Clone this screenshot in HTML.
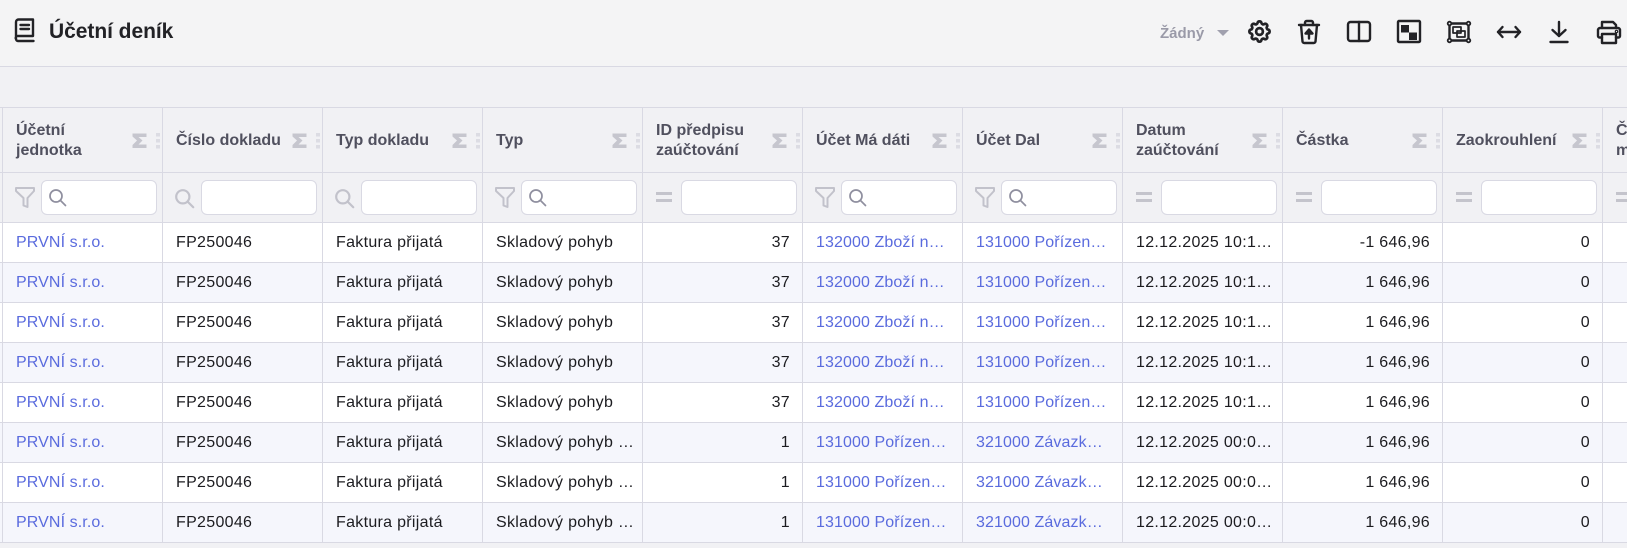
<!DOCTYPE html>
<html lang="cs">
<head>
<meta charset="utf-8">
<title>Účetní deník</title>
<style>
html,body{margin:0;padding:0;width:1627px;height:548px;overflow:hidden;background:#f1f1f4;font-family:"Liberation Sans",sans-serif;}
#bar{position:absolute;left:0;top:0;width:1627px;height:66px;background:#f4f4f5;border-bottom:1px solid #d9d9e3;}
#title{position:absolute;left:49px;top:17px;font-size:21px;line-height:30px;font-weight:bold;color:#222226;white-space:nowrap;letter-spacing:-.05px;}
#zad{position:absolute;left:1160px;top:24px;font-size:15px;line-height:20px;font-weight:bold;color:#9a9aa8;}
#car{position:absolute;left:1217px;top:30px;width:0;height:0;border-left:6px solid transparent;border-right:6px solid transparent;border-top:6px solid #a0a0ae;}
svg.i{position:absolute;fill:none;stroke:#222226;stroke-width:2.4;stroke-linecap:round;stroke-linejoin:round;}
#wrap{position:absolute;left:-158px;top:107px;width:1785px;height:441px;overflow:hidden;}
table{border-collapse:separate;border-spacing:0;table-layout:fixed;width:1920px;}
col{width:160px;}
td,th{box-sizing:border-box;border-left:1px solid #d9d9e3;border-bottom:1px solid #d9d9e3;padding:0 12px 0 13px;white-space:nowrap;overflow:hidden;position:relative;}
tr.h th{height:66px;background:#f1f1f4;border-top:1px solid #d9d9e3;text-align:left;font-size:16px;line-height:20px;color:#50505e;letter-spacing:0;font-weight:bold;padding-top:1px;}
tr.h{height:66px;}
tr.f td{height:50px;background:#f1f1f4;padding:0;}
tr.f{height:50px;}
tr.r td{height:40px;font-size:16px;color:#1c1c20;letter-spacing:.3px;background:#fff;}
tr.r.e td{background:#f5f6fc;}
tr.r{height:40px;}
tr.r td.n{text-align:right;}
tr.r td.l{color:#5a6bde;letter-spacing:.1px;}
.s{position:absolute;left:129px;top:25px;width:16px;height:16px;}
.d{position:absolute;left:153px;top:25px;width:4px;height:16px;}
.inp{position:absolute;left:38px;top:7px;width:116px;height:35px;box-sizing:border-box;background:#fff;border:1px solid #d9d9e3;border-radius:6px;}
svg.g{position:absolute;fill:none;stroke:#c2c2cb;stroke-width:2;stroke-linecap:round;stroke-linejoin:round;}
svg.m{position:absolute;left:45px;top:15px;fill:none;stroke:#8f8f9f;stroke-width:1.7;stroke-linecap:round;stroke-linejoin:round;}
.eq{position:absolute;left:13px;top:19px;width:16px;height:10px;box-sizing:border-box;border-top:3px solid #c4c4cc;border-bottom:3px solid #c4c4cc;}
</style>
</head>
<body>
<svg width="0" height="0" style="position:absolute">
<defs>
<g id="sig"><path d="M0.500 0.500H14.500V4H6.500L10.500 7.500L6.500 11.500H14.500V15H0.500V12L5 7.500L0.500 3.500Z" fill="#c6c6ce" stroke="none"/></g>
<g id="dots"><rect x="0" y="0" width="4" height="3.500" fill="#dcdce3"/><rect x="0" y="6" width="4" height="3.500" fill="#dcdce3"/><rect x="0" y="12" width="4" height="3.500" fill="#dcdce3"/></g>
<g id="fil"><path d="M2 2H20V5L13.500 12V21L9.500 19.500V12L2 5Z"/></g>
<g id="mag"><circle cx="8" cy="8" r="6"/><path d="M12.500 12.500L17.500 17.500"/></g>
</defs>
</svg>

<div id="bar"></div>
<svg class="i" style="left:12px;top:17px" width="24" height="26" viewBox="0 0 24 26"><path d="M4 22V5a2.500 2.500 0 0 1 2.500-2.500H21V19H6a2 2 0 0 0-2 3a2 2 0 0 0 2 2H21.500"/><path d="M8.500 8H17M8.500 12H17" stroke-width="2.400"/></svg>
<div id="title">Účetní deník</div>
<div id="zad">Žádný</div>
<div id="car"></div>

<svg class="i" style="left:1246px;top:18px" width="27" height="27" viewBox="0 0 24 24"><path d="M10.325 4.317c.426 -1.756 2.924 -1.756 3.35 0a1.724 1.724 0 0 0 2.573 1.066c1.543 -.94 3.31 .826 2.37 2.37a1.724 1.724 0 0 0 1.065 2.572c1.756 .426 1.756 2.924 0 3.35a1.724 1.724 0 0 0 -1.066 2.573c.94 1.543 -.826 3.31 -2.37 2.37a1.724 1.724 0 0 0 -2.572 1.065c-.426 1.756 -2.924 1.756 -3.35 0a1.724 1.724 0 0 0 -2.573 -1.066c-1.543 .94 -3.31 -.826 -2.37 -2.37a1.724 1.724 0 0 0 -1.065 -2.572c-1.756 -.426 -1.756 -2.924 0 -3.35a1.724 1.724 0 0 0 1.066 -2.573c-.94 -1.543 .826 -3.31 2.37 -2.37c1 .608 2.296 .07 2.572 -1.065z"/><circle cx="12" cy="12" r="3"/></svg>

<svg class="i" style="left:1297px;top:19px" width="24" height="26" viewBox="0 0 24 26"><path d="M2 6H22"/><path d="M8 6V3.500A2 2 0 0 1 10 2H14A2 2 0 0 1 16 3.500V6"/><path d="M4 6L5.500 22.500A2 2 0 0 0 7.500 24H16.500A2 2 0 0 0 18.500 22.500L20 6"/><path d="M12 19.500V12"/><path d="M8.500 14.500L12 10.500L15.500 14.500Z" fill="#222226"/></svg>

<svg class="i" style="left:1346px;top:20px" width="26" height="23" viewBox="0 0 26 23"><rect x="2" y="2" width="22" height="19" rx="2.500"/><path d="M13 2V21"/></svg>

<svg class="i" style="left:1396px;top:19px" width="26" height="25" viewBox="0 0 26 25"><rect x="2" y="2" width="22" height="21" rx="1"/><rect x="5" y="6" width="8" height="7.500" fill="#222226" stroke="none"/><rect x="13" y="13.500" width="8" height="7.500" fill="#222226" stroke="none"/></svg>

<svg class="i" style="left:1446px;top:20px" width="26" height="24" viewBox="0 0 26 24"><rect x="3.500" y="3.500" width="19" height="17"/><circle cx="3.500" cy="3.500" r="1.800" fill="#f4f4f5" stroke-width="1.800"/><circle cx="22.500" cy="3.500" r="1.800" fill="#f4f4f5" stroke-width="1.800"/><circle cx="3.500" cy="20.500" r="1.800" fill="#f4f4f5" stroke-width="1.800"/><circle cx="22.500" cy="20.500" r="1.800" fill="#f4f4f5" stroke-width="1.800"/><rect x="7" y="7" width="8" height="6" stroke-width="1.700"/><rect x="11" y="11" width="8" height="6" stroke-width="1.700"/></svg>

<svg class="i" style="left:1496px;top:22px" width="26" height="20" viewBox="0 0 26 20"><path d="M2 10H24"/><path d="M6.500 5L2 10L6.500 15"/><path d="M19.500 5L24 10L19.500 15"/></svg>

<svg class="i" style="left:1549px;top:20px" width="20" height="24" viewBox="0 0 20 24"><path d="M10 2V16"/><path d="M3.500 10L10 16L16.500 10"/><path d="M1.500 22H18.500"/></svg>

<svg class="i" style="left:1596px;top:19px" width="26" height="26" viewBox="0 0 26 26"><path d="M6 9V3H17L20 6V9"/><path d="M6 18.500H3.500A1.500 1.500 0 0 1 2 17V11A2 2 0 0 1 4 9H22A2 2 0 0 1 24 11V17A1.500 1.500 0 0 1 22.500 18.500H20"/><path d="M6 15H20V24H6Z"/><circle cx="20.500" cy="12.500" r=".6"/></svg>

<div id="wrap">
<table>
<colgroup><col><col><col><col><col><col><col><col><col><col><col><col></colgroup>
<tbody>
<tr class="h">
<th></th>
<th>Účetní<br>jednotka<svg class="s"><use href="#sig"/></svg><svg class="d"><use href="#dots"/></svg></th>
<th>Číslo dokladu<svg class="s"><use href="#sig"/></svg><svg class="d"><use href="#dots"/></svg></th>
<th>Typ dokladu<svg class="s"><use href="#sig"/></svg><svg class="d"><use href="#dots"/></svg></th>
<th>Typ<svg class="s"><use href="#sig"/></svg><svg class="d"><use href="#dots"/></svg></th>
<th>ID předpisu<br>zaúčtování<svg class="s"><use href="#sig"/></svg><svg class="d"><use href="#dots"/></svg></th>
<th>Účet Má dáti<svg class="s"><use href="#sig"/></svg><svg class="d"><use href="#dots"/></svg></th>
<th>Účet Dal<svg class="s"><use href="#sig"/></svg><svg class="d"><use href="#dots"/></svg></th>
<th>Datum<br>zaúčtování<svg class="s"><use href="#sig"/></svg><svg class="d"><use href="#dots"/></svg></th>
<th>Částka<svg class="s"><use href="#sig"/></svg><svg class="d"><use href="#dots"/></svg></th>
<th>Zaokrouhlení<svg class="s"><use href="#sig"/></svg><svg class="d"><use href="#dots"/></svg></th>
<th>Částka<br>měna</th>
</tr>
<tr class="f">
<td></td>
<td><svg class="g" style="left:11px;top:13px" width="22" height="23"><use href="#fil"/></svg><div class="inp"></div><svg class="m" width="20" height="20"><use href="#mag"/></svg></td>
<td><svg class="g" style="left:11px;top:15px" width="22" height="22" viewBox="0 0 20 20"><use href="#mag"/></svg><div class="inp"></div></td>
<td><svg class="g" style="left:11px;top:15px" width="22" height="22" viewBox="0 0 20 20"><use href="#mag"/></svg><div class="inp"></div></td>
<td><svg class="g" style="left:11px;top:13px" width="22" height="23"><use href="#fil"/></svg><div class="inp"></div><svg class="m" width="20" height="20"><use href="#mag"/></svg></td>
<td><div class="eq"></div><div class="inp"></div></td>
<td><svg class="g" style="left:11px;top:13px" width="22" height="23"><use href="#fil"/></svg><div class="inp"></div><svg class="m" width="20" height="20"><use href="#mag"/></svg></td>
<td><svg class="g" style="left:11px;top:13px" width="22" height="23"><use href="#fil"/></svg><div class="inp"></div><svg class="m" width="20" height="20"><use href="#mag"/></svg></td>
<td><div class="eq"></div><div class="inp"></div></td>
<td><div class="eq"></div><div class="inp"></div></td>
<td><div class="eq"></div><div class="inp"></div></td>
<td><div class="eq"></div><div class="inp"></div></td>
</tr>
<tr class="r"><td></td><td class="l">PRVNÍ s.r.o.</td><td>FP250046</td><td>Faktura přijatá</td><td>Skladový pohyb</td><td class="n">37</td><td class="l">132000 Zboží n…</td><td class="l">131000 Pořízen…</td><td>12.12.2025 10:1…</td><td class="n">-1 646,96</td><td class="n">0</td><td></td></tr>
<tr class="r e"><td></td><td class="l">PRVNÍ s.r.o.</td><td>FP250046</td><td>Faktura přijatá</td><td>Skladový pohyb</td><td class="n">37</td><td class="l">132000 Zboží n…</td><td class="l">131000 Pořízen…</td><td>12.12.2025 10:1…</td><td class="n">1 646,96</td><td class="n">0</td><td></td></tr>
<tr class="r"><td></td><td class="l">PRVNÍ s.r.o.</td><td>FP250046</td><td>Faktura přijatá</td><td>Skladový pohyb</td><td class="n">37</td><td class="l">132000 Zboží n…</td><td class="l">131000 Pořízen…</td><td>12.12.2025 10:1…</td><td class="n">1 646,96</td><td class="n">0</td><td></td></tr>
<tr class="r e"><td></td><td class="l">PRVNÍ s.r.o.</td><td>FP250046</td><td>Faktura přijatá</td><td>Skladový pohyb</td><td class="n">37</td><td class="l">132000 Zboží n…</td><td class="l">131000 Pořízen…</td><td>12.12.2025 10:1…</td><td class="n">1 646,96</td><td class="n">0</td><td></td></tr>
<tr class="r"><td></td><td class="l">PRVNÍ s.r.o.</td><td>FP250046</td><td>Faktura přijatá</td><td>Skladový pohyb</td><td class="n">37</td><td class="l">132000 Zboží n…</td><td class="l">131000 Pořízen…</td><td>12.12.2025 10:1…</td><td class="n">1 646,96</td><td class="n">0</td><td></td></tr>
<tr class="r e"><td></td><td class="l">PRVNÍ s.r.o.</td><td>FP250046</td><td>Faktura přijatá</td><td>Skladový pohyb …</td><td class="n">1</td><td class="l">131000 Pořízen…</td><td class="l">321000 Závazk…</td><td>12.12.2025 00:0…</td><td class="n">1 646,96</td><td class="n">0</td><td></td></tr>
<tr class="r"><td></td><td class="l">PRVNÍ s.r.o.</td><td>FP250046</td><td>Faktura přijatá</td><td>Skladový pohyb …</td><td class="n">1</td><td class="l">131000 Pořízen…</td><td class="l">321000 Závazk…</td><td>12.12.2025 00:0…</td><td class="n">1 646,96</td><td class="n">0</td><td></td></tr>
<tr class="r e"><td></td><td class="l">PRVNÍ s.r.o.</td><td>FP250046</td><td>Faktura přijatá</td><td>Skladový pohyb …</td><td class="n">1</td><td class="l">131000 Pořízen…</td><td class="l">321000 Závazk…</td><td>12.12.2025 00:0…</td><td class="n">1 646,96</td><td class="n">0</td><td></td></tr>
</tbody>
</table>
</div>
</body>
</html>
